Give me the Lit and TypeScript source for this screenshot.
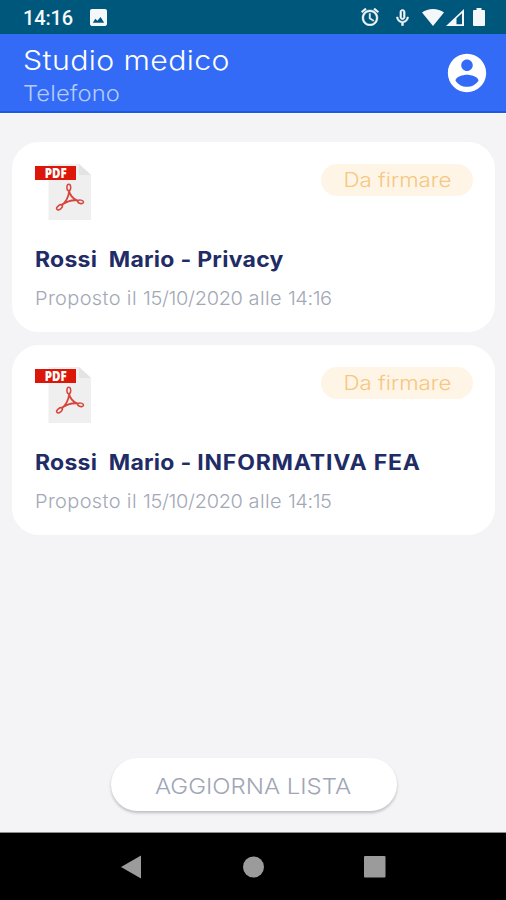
import { LitElement, html, css } from "lit";
import { customElement, property } from "lit/decorators.js";

const sans = css`Inter, "Open Sans", sans-serif`;

@customElement("status-bar")
class StatusBar extends LitElement {
  static styles = css`
    :host { display: flex; height: 34px; background: #00577c; color: #f4f8fa; align-items: center; }
    .time { font: 500 20px/34px Roboto, sans-serif; letter-spacing: -.15px; margin-left: 23px; padding-top: 1px; width: 67px; }
    .spacer { flex: 1; }
    svg { display: block; fill: #f4f8fa; }
    .alarm { margin-right: 17px; stroke: #f4f8fa; stroke-width: .5; }
    .mic { margin-right: 13px; stroke: #f4f8fa; stroke-width: .7; }
    .wifi { margin-right: 2px; }
    .signal { margin-right: 9px; }
    .battery { margin-right: 21px; }
  `;
  render() {
    return html`
      <span class="time">14:16</span>
      <svg width="17" height="17" viewBox="3 3 18 18"><path d="M21 19V5c0-1.1-.9-2-2-2H5c-1.1 0-2 .9-2 2v14c0 1.1.9 2 2 2h14c1.1 0 2-.9 2-2zM6 17.5l2.6-4.2 2.3 2.2 3.3-4 3.8 6z" /></svg>
      <span class="spacer"></span>
      <svg class="alarm" width="18" height="18" viewBox="1.8 1.8 20.4 20.4"><path d="M22 5.72l-4.6-3.86-1.29 1.53 4.6 3.86L22 5.72zM7.88 3.39L6.6 1.86 2 5.71l1.29 1.53 4.59-3.85zM12.5 8H11v6l4.75 2.85.75-1.23-4-2.37V8zM12 4c-4.97 0-9 4.03-9 9s4.02 9 9 9 9-4.03 9-9-4.03-9-9-9zm0 16c-3.87 0-7-3.13-7-7s3.13-7 7-7 7 3.13 7 7-3.13 7-7 7z" /></svg>
      <svg class="mic" width="13" height="17" viewBox="4.5 1.5 15 20"><path d="M12 14c1.66 0 3-1.34 3-3V5c0-1.66-1.34-3-3-3S9 3.34 9 5v6c0 1.66 1.34 3 3 3zm-1.2-9.1c0-.66.54-1.2 1.2-1.2s1.2.54 1.2 1.2v6.2c0 .66-.53 1.2-1.2 1.2s-1.2-.54-1.2-1.2V4.9zM17.3 11c0 3-2.54 5.1-5.3 5.1S6.7 14 6.7 11H5c0 3.41 2.72 6.23 6 6.72V21h2v-3.28c3.28-.48 6-3.3 6-6.72h-1.7z" /></svg>
      <svg class="wifi" width="22" height="17" viewBox="0 0 22 17"><path d="M11 17 0 3.6C3 1.2 6.8 0 11 0s8 1.2 11 3.600z" /></svg>
      <svg class="signal" width="18" height="17" viewBox="0 0 18 17"><path fill-rule="evenodd" d="M0 17 18 0V17zM10.5 9.3V15.2H16V4.2z" /></svg>
      <svg class="battery" width="12" height="18" viewBox="0 0 12 18"><path d="M3.5 0h5v2H11q1 0 1 1v14q0 1-1 1H1q-1 0-1-1V3q0-1 1-1h2.5z" /></svg>
    `;
  }
}

@customElement("app-header")
class AppHeader extends LitElement {
  static styles = css`
    :host { display: flex; box-sizing: border-box; height: 79px; padding: 7px 16px 0 23px; background: #336bf6; border-bottom: 2px solid #1b58e4; font-family: ${sans}; }
    .titles { flex: 1; }
    .title, .subtitle { transform-origin: left; white-space: nowrap; width: max-content; }
    .title { font-size: 27px; line-height: 39px; height: 37px; font-weight: 300; color: #fff; letter-spacing: .36px; transform: scaleX(1.12); }
    .subtitle { font-size: 22px; line-height: 30px; font-weight: 300; color: #b4ccfc; letter-spacing: .1px; transform: scaleX(1.08); }
    svg { width: 46px; height: 46px; margin-top: 9px; fill: #fff; }
  `;
  render() {
    return html`
      <div class="titles">
        <div class="title">Studio medico</div>
        <div class="subtitle">Telefono</div>
      </div>
      <svg viewBox="0 0 24 24"><path d="M12 2C6.480 2 2 6.480 2 12s4.480 10 10 10 10-4.480 10-10S17.520 2 12 2zm0 3c1.660 0 3 1.340 3 3s-1.340 3-3 3-3-1.340-3-3 1.340-3 3-3zm0 14.200c-2.500 0-4.710-1.280-6-3.220.030-1.990 4-3.080 6-3.080 1.990 0 5.970 1.090 6 3.080-1.290 1.940-3.500 3.220-6 3.220z" /></svg>
    `;
  }
}

@customElement("document-card")
class DocumentCard extends LitElement {
  @property() name = "";
  @property() time = "";
  static styles = css`
    :host { display: block; box-sizing: border-box; height: 190.5px; padding: 22px 22px 0 22.5px; border-radius: 27px; background: #fff; font-family: ${sans}; }
    .top { display: flex; justify-content: space-between; align-items: flex-start; height: 81.3px; }
    .badge { width: 152.5px; height: 32px; border-radius: 16px; background: #fef5e7; display: flex; justify-content: center; }
    .badge span { font-size: 20px; line-height: 33px; font-weight: 300; color: #f6c781; transform: scaleX(1.115); }
    .name, .date { transform-origin: left; white-space: pre; width: max-content; line-height: 30px; }
    .name { font-size: 21px; font-weight: 650; color: #1f2c66; letter-spacing: .25px; transform: scaleX(1.095); }
    .caps { letter-spacing: .75px; }
    .date { margin-top: 9px; font-size: 19px; font-weight: 300; color: #a3a8b6; transform: scaleX(1.05); }
    .word { letter-spacing: .35px; }
    .digits { letter-spacing: -.3px; }
    .time { letter-spacing: -.4px; }
    .pdf { font: 800 14px "Open Sans", sans-serif; }
  `;
  render() {
    const caps = this.name === this.name.toUpperCase();
    return html`
      <div class="top">
        <svg width="57" height="57" viewBox="0 0 57 57">
          <path fill="#efeff0" d="M13.5 0H44L56 11V56H13.5z" />
          <path fill="#e3e3e4" d="M44 0V11H56z" />
          <path fill="#dc1709" d="M0 2H41V16H0z" />
          <text class="pdf" x="9.8" y="14" fill="#fff" textLength="22" lengthAdjust="spacingAndGlyphs">PDF</text>
          <g fill="none" stroke="#d8453c" stroke-width="1.5" stroke-linejoin="round">
            <ellipse cx="33.8" cy="23.5" rx="1.9" ry="3.2" />
            <ellipse cx="24.5" cy="43.3" rx="3.3" ry="1.9" transform="rotate(-38 24.5 43.3)" />
            <ellipse cx="45.6" cy="37.8" rx="2.9" ry="1.7" transform="rotate(12 45.6 37.8)" />
            <path stroke-width="1.9" d="M34 26.5c.4 3.5 3.8 8.5 8.8 10.5M43 36.5c-5-.8-11 .8-16.3 4.2M26.7 41.5c4-3.5 7-9 7.5-14.5" />
          </g>
        </svg>
        <div class="badge"><span>Da firmare</span></div>
      </div>
      <div class="name">Rossi  Mario - <span class=${caps ? "caps" : ""}>${this.name}</span></div>
      <div class="date"><span class="word">Proposto il </span><span class="digits">15/10/2020</span><span class="word"> alle </span><span class="time">${this.time}</span></div>
    `;
  }
}

@customElement("nav-bar")
class NavBar extends LitElement {
  static styles = css`
    :host { display: flex; box-sizing: border-box; height: 68px; background: #000; border-top: 1px solid #8d8d8f; justify-content: center; align-items: center; gap: 99px; }
    svg { display: block; fill: #9b9b9b; }
  `;
  render() {
    return html`
      <svg width="23" height="24" viewBox="0 0 23 24"><path d="M0 12 20 .5V23.5z" /></svg>
      <svg width="22" height="22" viewBox="0 0 22 22"><circle cx="10.5" cy="11" r="10.5" /></svg>
      <svg width="22" height="22" viewBox="0 0 22 22"><rect width="21.5" height="21.5" rx="1" /></svg>
    `;
  }
}

@customElement("app-root")
class AppRoot extends LitElement {
  static styles = css`
    :host { display: flex; flex-direction: column; height: 900px; background: #f4f4f7; font-family: ${sans}; overflow: hidden; }
    .list { display: flex; flex-direction: column; gap: 12.5px; flex: 1; padding: 27.7px 10.7px 0 12px; border-top: 1px solid #fbfbfb; box-sizing: border-box; }
    .actions { display: flex; justify-content: center; padding: 0 0 21.5px 1px; }
    button { width: 286px; height: 53px; border: 0; border-radius: 27px; background: #fff; box-shadow: 0 2px 3px rgba(0, 0, 0, .22); font: 300 22px/50px ${sans}; color: #a0a6b6; padding: 3px 0 0; white-space: nowrap; }
    button span { display: inline-block; transform: scaleX(1.09); }
  `;
  render() {
    return html`
      <status-bar></status-bar>
      <app-header></app-header>
      <main class="list">
        <document-card name="Privacy" time="14:16"></document-card>
        <document-card name="INFORMATIVA FEA" time="14:15"></document-card>
      </main>
      <div class="actions"><button><span>AGGIORNA LISTA</span></button></div>
      <nav-bar></nav-bar>
    `;
  }
}
